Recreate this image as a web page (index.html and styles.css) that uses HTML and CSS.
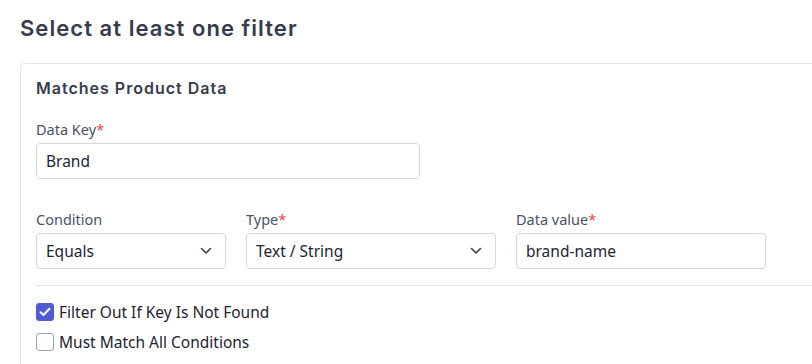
FILE: index.html
```html
<!DOCTYPE html>
<html>
<head>
<meta charset="utf-8">
<link rel="stylesheet" href="styles.css">
</head>
<body>
<div class="page">
  <h1 class="title">Select at least one filter</h1>
  <div class="card">
    <h2 class="card-title">Matches Product Data</h2>
    <div class="field key-field">
      <label class="label">Data Key<span class="req">*</span></label>
      <div class="input">Brand</div>
    </div>
    <div class="row">
      <div class="field cond">
        <label class="label">Condition</label>
        <div class="input select">Equals<svg class="chev" width="12" height="8" viewBox="0 0 12 8"><path d="M1.5 1.5 L6 6 L10.5 1.5" fill="none" stroke="#374151" stroke-width="1.6" stroke-linecap="round" stroke-linejoin="round"/></svg></div>
      </div>
      <div class="field type">
        <label class="label">Type<span class="req">*</span></label>
        <div class="input select">Text / String<svg class="chev" width="12" height="8" viewBox="0 0 12 8"><path d="M1.5 1.5 L6 6 L10.5 1.5" fill="none" stroke="#374151" stroke-width="1.6" stroke-linecap="round" stroke-linejoin="round"/></svg></div>
      </div>
      <div class="field value">
        <label class="label">Data value<span class="req">*</span></label>
        <div class="input">brand-name</div>
      </div>
    </div>
    <div class="divider"></div>
    <div class="checks">
      <div class="check"><span class="box on"><svg width="12" height="10" viewBox="0 0 12 10"><path d="M1.5 5.2 L4.5 8 L10.5 1.8" fill="none" stroke="#fff" stroke-width="2" stroke-linecap="round" stroke-linejoin="round"/></svg></span>Filter Out If Key Is Not Found</div>
      <div class="check"><span class="box"></span>Must Match All Conditions</div>
    </div>
  </div>
</div>
</body>
</html>
```

FILE: styles.css
```css
* { box-sizing: border-box; }
html, body { margin: 0; padding: 0; background: #fff; overflow: hidden; }
body { width: 812px; height: 364px; font-family: "Noto Sans", "Open Sans", sans-serif; }
.page { padding: 13px 0 0 20px; width: 860px; }
.title {
  margin: 0 0 20px 0;
  font-family: "Inter", "Noto Sans", sans-serif;
  font-weight: 600;
  font-size: 22px;
  line-height: 30px;
  color: #363b4e;
  letter-spacing: 1.05px;
}
.card {
  border: 1px solid #e3e5ea;
  border-radius: 4px;
  padding: 13px 16px 20px 15px;
  width: 840px;
}
.card-title {
  margin: 0 0 20px 0;
  font-family: "Inter", "Noto Sans", sans-serif;
  font-weight: 600;
  font-size: 16px;
  line-height: 22px;
  color: #363b4e;
  letter-spacing: 1px;
}
.field { display: flex; flex-direction: column; }
.label { font-size: 14.5px; line-height: 20px; color: #4b5266; margin-bottom: 4px; }
.req { color: #ef4444; }
.input {
  height: 36px;
  border: 1px solid #d5d8de;
  border-radius: 4px;
  padding: 0 9px;
  display: flex;
  align-items: center;
  font-size: 15.5px;
  color: #1f2430;
}
.key-field { width: 384px; }
.row { display: flex; gap: 20px; margin-top: 30px; }
.cond { width: 190px; }
.type { width: 250px; }
.value { width: 250px; }
.select { justify-content: space-between; }
.chev { margin-right: 4px; }
.divider { height: 1px; background: #e5e7eb; margin: 16px 0 17px 0; }
.checks { display: flex; flex-direction: column; gap: 12px; }
.check { display: flex; align-items: center; gap: 5px; font-size: 15.5px; line-height: 18px; color: #1f2430; }
.box {
  width: 18px; height: 18px;
  border: 1px solid #9ca0ad;
  border-radius: 3px;
  display: inline-flex; align-items: center; justify-content: center;
  background: #fff;
}
.box.on { background: #4f5bd5; border-color: #4f5bd5; }
```
